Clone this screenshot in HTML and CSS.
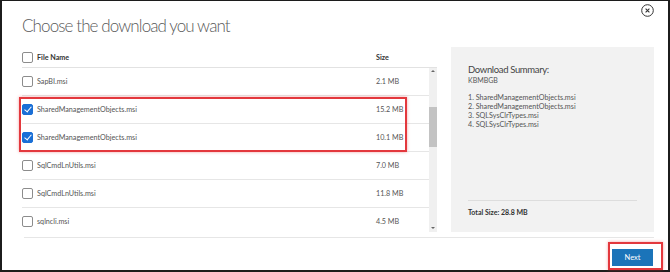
FILE: index.html
```html
<!DOCTYPE html>
<html lang="en">
<head>
  <meta charset="UTF-8" />
  <title>Choose the download you want</title>
  <link rel="stylesheet" href="styles.css">
</head>
<body>

  <div class="dialog">
    <header class="dialog-head">
      <h1>Choose the download you want</h1>
      <button class="close" aria-label="Close">
        <svg width="13" height="13" viewBox="0 0 13 13">
          <circle cx="6.5" cy="6.5" r="5.8" fill="none" stroke="#333" stroke-width="1"/>
          <path d="M4.6 4.6 L8.4 8.4 M8.4 4.6 L4.6 8.4" stroke="#333" stroke-width="1.1"/>
        </svg>
      </button>
    </header>

    <main class="dialog-body">
      <section class="files">
        <div class="row files-head">
          <span class="box"></span>
          <span class="name">File Name</span>
          <span class="size">Size</span>
        </div>

        <div class="files-scroll">
          <div class="files-list">
            <div class="row"><span class="box"></span><span class="name">SapBI.msi</span><span class="size">2.1 MB</span></div>
            <div class="row"><span class="box checked"></span><span class="name">SharedManagementObjects.msi</span><span class="size">15.2 MB</span></div>
            <div class="row"><span class="box checked"></span><span class="name">SharedManagementObjects.msi</span><span class="size">10.1 MB</span></div>
            <div class="row"><span class="box"></span><span class="name">SqlCmdLnUtils.msi</span><span class="size">7.0 MB</span></div>
            <div class="row"><span class="box"></span><span class="name">SqlCmdLnUtils.msi</span><span class="size">11.8 MB</span></div>
            <div class="row"><span class="box"></span><span class="name">sqlncli.msi</span><span class="size">4.5 MB</span></div>
          </div>
          <div class="scrollbar">
            <span class="arrow up"></span>
            <span class="thumb"></span>
            <span class="arrow down"></span>
          </div>
        </div>

        <div class="mark mark-rows"></div>
      </section>

      <aside class="summary">
        <h2>Download Summary:</h2>
        <div class="kb">KBMBGB</div>
        <ol class="picked">
          <li>SharedManagementObjects.msi</li>
          <li>SharedManagementObjects.msi</li>
          <li>SQLSysClrTypes.msi</li>
          <li>SQLSysClrTypes.msi</li>
        </ol>
        <div class="total">Total Size: 28.8 MB</div>
      </aside>
    </main>

    <footer class="dialog-foot">
      <button class="btn-next">Next</button>
    </footer>

    <div class="mark mark-next"></div>
  </div>

</body>
</html>
```

FILE: styles.css
```css
* {
  box-sizing: border-box;
}

body {
  margin: 0;
  font-family: Lato, 'Open Sans', sans-serif;
  background: #fff;
  color: #555;
}

.dialog {
  position: relative;
  width: 670px;
  height: 272px;
  border: 2px solid #1c1c1c;
  border-top-width: 1px;
  padding: 0 14px 0 20px;
  background: #fff;
}

/* header */

.dialog-head {
  display: flex;
  justify-content: space-between;
  align-items: flex-start;
  height: 46px;
  padding-top: 3px;
}

.dialog-head h1 {
  margin: 11px 0 0;
  font-size: 17px;
  line-height: 22px;
  font-weight: 300;
  letter-spacing: -0.9px;
  color: #5a5a5a;
}

.close {
  width: 13px;
  height: 13px;
  padding: 0;
  border: none;
  background: none;
  cursor: pointer;
}

.close svg {
  display: block;
}

/* file list */

.dialog-body {
  display: flex;
  gap: 14px;
  height: 185px;
}

.files {
  position: relative;
  width: 415px;
  display: flex;
  flex-direction: column;
}

.row {
  display: grid;
  grid-template-columns: 15px 1fr 53px;
  align-items: center;
  height: 28px;
  border-bottom: 1px solid #e6e6e6;
  font-size: 7.2px;
  color: #555;
}

.files-head {
  height: 21px;
  padding-right: 8px;
  border-bottom: 1px solid #e2e2e2;
  font-weight: 700;
  color: #333;
}

.box {
  width: 11px;
  height: 11px;
  border: 1px solid #8c8c8c;
  border-radius: 2px;
  background: #fff;
}

.box.checked {
  border-color: #1a6fd6;
  background: #1a6fd6;
  position: relative;
}

.box.checked::after {
  content: "";
  position: absolute;
  left: 3px;
  top: 0px;
  width: 3px;
  height: 6px;
  border: solid #fff;
  border-width: 0 1.6px 1.6px 0;
  transform: rotate(40deg);
}

.files-scroll {
  flex: 1;
  display: flex;
  overflow: hidden;
}

.files-list {
  flex: 1;
}

.scrollbar {
  width: 8px;
  display: flex;
  flex-direction: column;
  align-items: center;
  background: #f0f0f0;
}

.arrow {
  width: 0;
  height: 0;
  border-left: 2px solid transparent;
  border-right: 2px solid transparent;
}

.arrow.up {
  margin-top: 2px;
  border-bottom: 2px solid #666;
}

.arrow.down {
  margin-top: auto;
  margin-bottom: 3px;
  border-top: 2px solid #666;
}

.thumb {
  width: 8px;
  height: 40px;
  margin-top: 35px;
  background: #c3c3c3;
}

/* summary */

.summary {
  flex: 1;
  display: flex;
  flex-direction: column;
  background: #f2f2f2;
  padding: 17px 17px 15px;
  color: #555;
}

.summary h2 {
  margin: 0;
  font-size: 9.5px;
  line-height: 12px;
  font-weight: 400;
  letter-spacing: -0.35px;
  color: #444;
}

.kb {
  font-size: 7px;
  line-height: 9px;
}

.picked {
  margin: 8px 0 0;
  padding: 0;
  list-style: none;
  counter-reset: n;
  font-size: 7.2px;
  line-height: 9px;
}

.picked li {
  counter-increment: n;
}

.picked li::before {
  content: counter(n) ". ";
}

.total {
  margin-top: auto;
  padding-top: 6px;
  border-top: 1px solid #ddd;
  font-size: 7px;
  line-height: 10px;
  font-weight: 700;
  color: #333;
}

/* footer */

.dialog-foot {
  display: flex;
  justify-content: flex-end;
  margin: 5px 0 0 2px;
  padding-top: 11px;
  border-top: 1px solid #e6e6e6;
}

.btn-next {
  width: 41px;
  height: 17px;
  margin-right: 1px;
  padding: 0;
  border: none;
  background: #1b74b9;
  color: #fff;
  font-family: inherit;
  font-size: 7.5px;
  cursor: pointer;
}

/* red highlight boxes */

.mark {
  position: absolute;
  border: 2px solid #e3383d;
  box-shadow: 0 0 3px rgba(227, 56, 61, 0.45);
  pointer-events: none;
}

.mark-rows {
  left: -3px;
  top: 50px;
  width: 388px;
  height: 55px;
}

.mark-next {
  right: 5px;
  bottom: 0;
  width: 55px;
  height: 28px;
}
```
